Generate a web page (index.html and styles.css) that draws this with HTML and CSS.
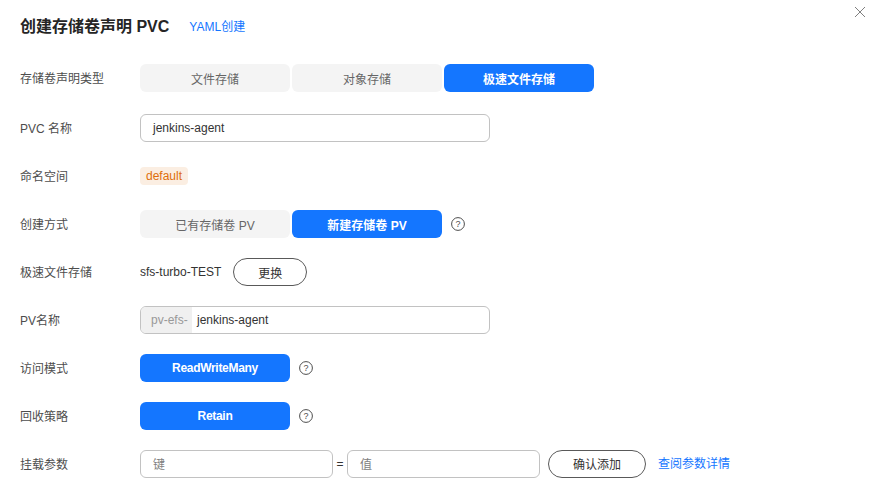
FILE: index.html
```html
<!DOCTYPE html>
<html lang="zh-CN">
<head>
<meta charset="utf-8">
<title>创建存储卷声明 PVC</title>
<link rel="stylesheet" href="styles.css">
</head>
<body>
<div class="dialog">
  <button class="close" aria-label="关闭"><svg viewBox="0 0 12 12" width="12" height="12"><path d="M1 1l10 10M11 1L1 11" stroke="#808080" stroke-width="1" fill="none"/></svg></button>
  <header class="head">
    <h1 class="title">创建存储卷声明 PVC</h1>
    <a class="link">YAML创建</a>
  </header>
  <form class="form">
    <div class="row">
      <label class="label">存储卷声明类型</label>
      <div class="seg">
        <span class="opt">文件存储</span>
        <span class="opt">对象存储</span>
        <span class="opt on">极速文件存储</span>
      </div>
    </div>
    <div class="row row-tight">
      <label class="label">PVC 名称</label>
      <div class="input wide"><span class="val">jenkins-agent</span></div>
    </div>
    <div class="row">
      <label class="label">命名空间</label>
      <span class="tag">default</span>
    </div>
    <div class="row">
      <label class="label">创建方式</label>
      <div class="seg">
        <span class="opt">已有存储卷 PV</span>
        <span class="opt on">新建存储卷 PV</span>
      </div>
      <svg class="help" viewBox="0 0 14 14" width="14" height="14"><circle cx="7" cy="7" r="6.4" fill="none" stroke="#4d4d4d"/><text x="7" y="10.2" text-anchor="middle" class="q">?</text></svg>
    </div>
    <div class="row">
      <label class="label">极速文件存储</label>
      <span class="plain">sfs-turbo-TEST</span>
      <span class="pill change">更换</span>
    </div>
    <div class="row">
      <label class="label">PV名称</label>
      <div class="input wide joined"><span class="prefix">pv-efs-</span><span class="val2">jenkins-agent</span></div>
    </div>
    <div class="row">
      <label class="label">访问模式</label>
      <div class="seg"><span class="opt on tight">ReadWriteMany</span></div>
      <svg class="help" viewBox="0 0 14 14" width="14" height="14"><circle cx="7" cy="7" r="6.4" fill="none" stroke="#4d4d4d"/><text x="7" y="10.2" text-anchor="middle" class="q">?</text></svg>
    </div>
    <div class="row">
      <label class="label">回收策略</label>
      <div class="seg"><span class="opt on tight">Retain</span></div>
      <svg class="help" viewBox="0 0 14 14" width="14" height="14"><circle cx="7" cy="7" r="6.4" fill="none" stroke="#4d4d4d"/><text x="7" y="10.2" text-anchor="middle" class="q">?</text></svg>
    </div>
    <div class="row">
      <label class="label">挂载参数</label>
      <div class="input small"><span class="ph">键</span></div>
      <span class="eq">=</span>
      <div class="input small"><span class="ph">值</span></div>
      <span class="pill confirm">确认添加</span>
      <a class="link details">查阅参数详情</a>
    </div>
  </form>
</div>
</body>
</html>
```
FILE: styles.css
```css
* { box-sizing: border-box; }
html, body { margin: 0; height: 100%; }
body {
  background: #fff;
  color: #252b3a;
  font-family: "Liberation Sans", "Noto Sans CJK SC", sans-serif;
  font-size: 12px;
  overflow: hidden;
}
.dialog { position: relative; width: 872px; height: 491px; padding: 17px 20px 0; overflow: hidden; }
.close {
  position: absolute; top: 6px; right: 6px;
  padding: 0; border: 0; background: none; width: 12px; height: 12px; display: block;
}
.close svg { display: block; }
.head { display: flex; align-items: center; height: 20px; }
.title { margin: 0; font-size: 16px; font-weight: 700; line-height: 20px; color: #252525; }
.link { color: #1476ff; font-size: 12px; line-height: 18px; }
.head .link { margin-left: 20px; }
.form { display: flex; flex-direction: column; gap: 20px; margin-top: 27px; }
.row { display: flex; align-items: center; height: 28px; color: #333; }
.row-tight { margin-top: 2px; }
.label { width: 120px; flex: none; color: #4d4d4d; line-height: 18px; padding-top: 2px; }
.seg { display: flex; gap: 2px; }
.opt {
  width: 150px; height: 28px; border-radius: 6px; background: #f4f4f4; color: #666;
  display: flex; align-items: center; justify-content: center;
}
.opt.on { background: #1476ff; color: #fff; font-weight: 700; }
.opt.tight { letter-spacing: -0.3px; }
.input {
  height: 28px; border: 1px solid #c2c2c2; border-radius: 6px;
  display: flex; align-items: center; background: #fff; overflow: hidden;
}
.wide { width: 350px; }
.small { width: 193px; }
.val { padding-left: 12px; color: #333; }
.val2 { padding-left: 5px; color: #333; }
.prefix {
  align-self: stretch; display: flex; align-items: center; width: 51px; padding-left: 10px;
  background: #f0f0f0; color: #999;
}
.ph { padding: 0 0 2px 12px; color: #808080; font-size: 12px; }
.tag {
  height: 18px; padding: 0 6px; border-radius: 4px; background: #fbeee2; color: #de6e0b;
  display: flex; align-items: center;
}
.help { margin-left: 9px; flex: none; }
.q { font: 400 9px "Liberation Sans", sans-serif; fill: #4d4d4d; }
.plain { color: #333; }
.pill {
  height: 28px; border: 1px solid #595959; border-radius: 14px; background: #fff; color: #333;
  display: flex; align-items: center; justify-content: center;
}
.change { width: 74px; margin-left: 12px; }
.eq { width: 14px; text-align: center; color: #333; }
.confirm { width: 98px; margin-left: 8px; padding-bottom: 2px; }
.details { margin-left: 12px; }
```
